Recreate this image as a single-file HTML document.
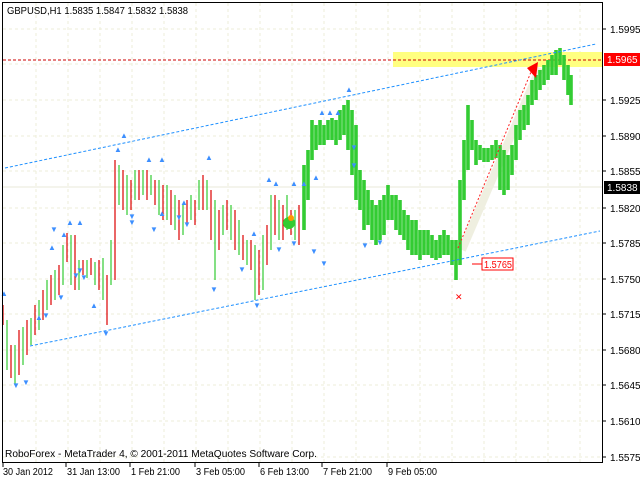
<!DOCTYPE html><html><head><style>
body{margin:0;width:640px;height:480px;background:#fff;overflow:hidden;font-family:"Liberation Sans",sans-serif;font-size:11px}
svg{position:absolute;left:0;top:0}
.t{font-family:"Liberation Sans",sans-serif;font-size:10px}
</style></head><body>
<svg width="640" height="480" xmlns="http://www.w3.org/2000/svg">
<g stroke="#eeeed8" stroke-dasharray="3,3" stroke-width="1">
<line x1="3" y1="29" x2="602" y2="29"/><line x1="3" y1="64" x2="602" y2="64"/><line x1="3" y1="100" x2="602" y2="100"/><line x1="3" y1="136" x2="602" y2="136"/><line x1="3" y1="171" x2="602" y2="171"/><line x1="3" y1="208" x2="602" y2="208"/><line x1="3" y1="243" x2="602" y2="243"/><line x1="3" y1="279" x2="602" y2="279"/><line x1="3" y1="314" x2="602" y2="314"/><line x1="3" y1="350" x2="602" y2="350"/><line x1="3" y1="385" x2="602" y2="385"/><line x1="3" y1="421" x2="602" y2="421"/><line x1="3" y1="457" x2="602" y2="457"/>
<line x1="36" y1="3" x2="36" y2="462"/><line x1="68" y1="3" x2="68" y2="462"/><line x1="100" y1="3" x2="100" y2="462"/><line x1="132" y1="3" x2="132" y2="462"/><line x1="164" y1="3" x2="164" y2="462"/><line x1="196" y1="3" x2="196" y2="462"/><line x1="228" y1="3" x2="228" y2="462"/><line x1="260" y1="3" x2="260" y2="462"/><line x1="292" y1="3" x2="292" y2="462"/><line x1="324" y1="3" x2="324" y2="462"/><line x1="356" y1="3" x2="356" y2="462"/><line x1="388" y1="3" x2="388" y2="462"/><line x1="420" y1="3" x2="420" y2="462"/><line x1="452" y1="3" x2="452" y2="462"/><line x1="484" y1="3" x2="484" y2="462"/><line x1="516" y1="3" x2="516" y2="462"/><line x1="548" y1="3" x2="548" y2="462"/><line x1="580" y1="3" x2="580" y2="462"/>
</g>
<rect x="393" y="52" width="209" height="15" fill="#ffff80"/>
<line x1="3" y1="60" x2="602" y2="60" stroke="#c00" stroke-dasharray="3,2"/>
<line x1="3" y1="187" x2="602" y2="187" stroke="#e8e8d8"/>
<path d="M462,250 L540,68" stroke="#efefe0" stroke-width="8"/>
<path stroke="#d00" stroke-width="1.2" d="M3,305V325M11,345V378M19,330V375M27,320V355M35,305V335M43,290V320M51,275V305M59,265V295M67,233V262M75,235V290M83,260V275M91,258V275M99,260V290M107,275V325M115,160V280M123,170V210M131,180V210M139,170V200M147,170V200M155,180V205M163,185V220M171,190V225M179,200V240M187,200V225M195,200V225M203,175V210M211,190V240M219,210V250M227,200V230M235,210V250M243,235V260M251,240V270M259,250V295M267,225V265M275,195V235M283,205V240M291,210V235M299,205V245"/>
<path stroke="#3c3" stroke-width="1.2" d="M7,320V370M15,345V385M23,327V365M31,318V345M39,300V330M47,280V310M55,270V300M63,245V285M71,235V285M79,260V290M87,260V278M95,262V285M103,258V300M111,240V285M119,165V205M127,175V215M135,170V200M143,170V195M151,175V195M159,180V215M167,185V220M175,195V230M183,205V235M191,195V220M199,180V210M207,180V210M215,200V280M223,205V235M231,205V240M239,220V255M247,240V265M255,245V300M263,235V290M271,195V250M279,200V240M287,195V230M295,210V240"/>
<path stroke="#33cc33" stroke-width="3.6" d="M304,165V230M308,150V200M312,120V160M316,125V150M320,120V145M324,125V145M328,120V140M332,118V140M336,120V145M340,110V140M344,105V135M348,100V150M352,110V175M356,125V200M360,170V210M364,180V230M368,190V225M372,200V240M376,205V245M380,200V240M384,195V235M388,185V220M392,195V220M396,195V230M400,200V235M404,210V240M408,215V250M412,220V255M416,220V255M420,230V260M424,230V255M428,230V255M432,235V258M436,240V260M440,235V258M444,230V255M448,235V255M452,240V265M456,240V280M460,180V265M464,140V200M468,105V170M472,120V150M476,140V165M480,145V160M484,148V162M488,148V162M492,145V160M496,140V158M500,145V190M504,150V195M508,155V190M512,145V175M516,125V160M520,110V140M524,105V130M528,95V125M532,80V105M536,75V100M540,70V90M544,65V85M548,60V80M552,55V75M556,50V75M560,48V65M564,55V80M568,65V95M571,75V105"/>
<line x1="5" y1="168" x2="596" y2="44" stroke="#1e90ff" stroke-dasharray="3,2"/>
<line x1="30" y1="346" x2="600" y2="231" stroke="#1e90ff" stroke-dasharray="3,2"/>
<line x1="458" y1="248" x2="531" y2="72" stroke="#f22" stroke-dasharray="2,2"/>
<polygon points="527,68 538,62 536,78" fill="#f00"/>
<line x1="472" y1="264" x2="482" y2="264" stroke="#f00"/>
<rect x="482" y="258" width="31" height="12" fill="#fff" stroke="#f00"/>
<text x="484" y="268" class="t" fill="#f00" textLength="28" lengthAdjust="spacingAndGlyphs">1.5765</text>
<text x="455" y="300" fill="#f00" font-size="9">✕</text>
<circle cx="289" cy="223" r="6" fill="#3c3"/><circle cx="291" cy="218" r="3" fill="#f90"/>
<g fill="#3d8fff" font-size="8">
<text x="120" y="138">▲</text><text x="114" y="152">▲</text><text x="145" y="162">▲</text><text x="158" y="162">▲</text><text x="205" y="160">▲</text><text x="66" y="225">▲</text><text x="76" y="225">▲</text><text x="60" y="237">▲</text><text x="48" y="250">▲</text><text x="35" y="320">▲</text><text x="0" y="296">▲</text><text x="90" y="308">▲</text><text x="180" y="205">▲</text><text x="250" y="236">▲</text><text x="265" y="182">▲</text><text x="290" y="186">▲</text><text x="300" y="186">▲</text><text x="272" y="186">▲</text><text x="318" y="115">▲</text><text x="326" y="115">▲</text><text x="334" y="115">▲</text><text x="345" y="92">▲</text><text x="312" y="180">▲</text><text x="158" y="216">▲</text>
<text x="12" y="388">▼</text><text x="22" y="385">▼</text><text x="102" y="336">▼</text><text x="128" y="225">▼</text><text x="150" y="232">▼</text><text x="183" y="227">▼</text><text x="210" y="292">▼</text><text x="238" y="272">▼</text><text x="253" y="308">▼</text><text x="275" y="252">▼</text><text x="50" y="232">▼</text><text x="72" y="278">▼</text><text x="80" y="280">▼</text><text x="76" y="273">▼</text><text x="57" y="300">▼</text><text x="42" y="318">▼</text><text x="128" y="219">▼</text><text x="175" y="220">▼</text><text x="290" y="246">▼</text><text x="310" y="254">▼</text><text x="350" y="150">▼</text><text x="350" y="168">▼</text><text x="361" y="248">▼</text><text x="376" y="245">▼</text><text x="320" y="266">▼</text>
</g>
<rect x="2.5" y="2.5" width="600" height="460" fill="none" stroke="#000"/>
<g stroke="#000"><line x1="602" y1="29" x2="606" y2="29"/><line x1="602" y1="100" x2="606" y2="100"/><line x1="602" y1="136" x2="606" y2="136"/><line x1="602" y1="171" x2="606" y2="171"/><line x1="602" y1="208" x2="606" y2="208"/><line x1="602" y1="243" x2="606" y2="243"/><line x1="602" y1="279" x2="606" y2="279"/><line x1="602" y1="314" x2="606" y2="314"/><line x1="602" y1="350" x2="606" y2="350"/><line x1="602" y1="385" x2="606" y2="385"/><line x1="602" y1="421" x2="606" y2="421"/><line x1="602" y1="457" x2="606" y2="457"/></g>
<g class="t" fill="#000">
<text x="610" y="33">1.5995</text><text x="610" y="104">1.5925</text><text x="610" y="140">1.5890</text><text x="610" y="175">1.5855</text><text x="610" y="212">1.5820</text><text x="610" y="247">1.5785</text><text x="610" y="283">1.5750</text><text x="610" y="318">1.5715</text><text x="610" y="354">1.5680</text><text x="610" y="389">1.5645</text><text x="610" y="425">1.5610</text><text x="610" y="461">1.5575</text>
</g>
<rect x="604" y="53" width="36" height="13" fill="#f00"/><text x="607" y="63" class="t" fill="#fff">1.5965</text>
<rect x="604" y="181" width="36" height="13" fill="#000"/><text x="607" y="191" class="t" fill="#fff">1.5838</text>
<text x="7" y="14" class="t" fill="#000" textLength="181" lengthAdjust="spacingAndGlyphs">GBPUSD,H1  1.5835 1.5847 1.5832 1.5838</text>
<text x="5" y="457" class="t" fill="#000" textLength="312" lengthAdjust="spacingAndGlyphs">RoboForex - MetaTrader 4, © 2001-2011 MetaQuotes Software Corp.</text>
<g class="t" fill="#000"><text x="3" y="475" textLength="50" lengthAdjust="spacingAndGlyphs">30 Jan 2012</text><text x="67" y="475" textLength="53" lengthAdjust="spacingAndGlyphs">31 Jan 13:00</text><text x="131" y="475" textLength="49" lengthAdjust="spacingAndGlyphs">1 Feb 21:00</text><text x="196" y="475" textLength="49" lengthAdjust="spacingAndGlyphs">3 Feb 05:00</text><text x="260" y="475" textLength="49" lengthAdjust="spacingAndGlyphs">6 Feb 13:00</text><text x="323" y="475" textLength="49" lengthAdjust="spacingAndGlyphs">7 Feb 21:00</text><text x="388" y="475" textLength="49" lengthAdjust="spacingAndGlyphs">9 Feb 05:00</text></g>
<g stroke="#000"><line x1="3" y1="463" x2="3" y2="467"/><line x1="66" y1="463" x2="66" y2="467"/><line x1="130" y1="463" x2="130" y2="467"/><line x1="195" y1="463" x2="195" y2="467"/><line x1="259" y1="463" x2="259" y2="467"/><line x1="322" y1="463" x2="322" y2="467"/><line x1="387" y1="463" x2="387" y2="467"/></g>
</svg>
</body></html>
